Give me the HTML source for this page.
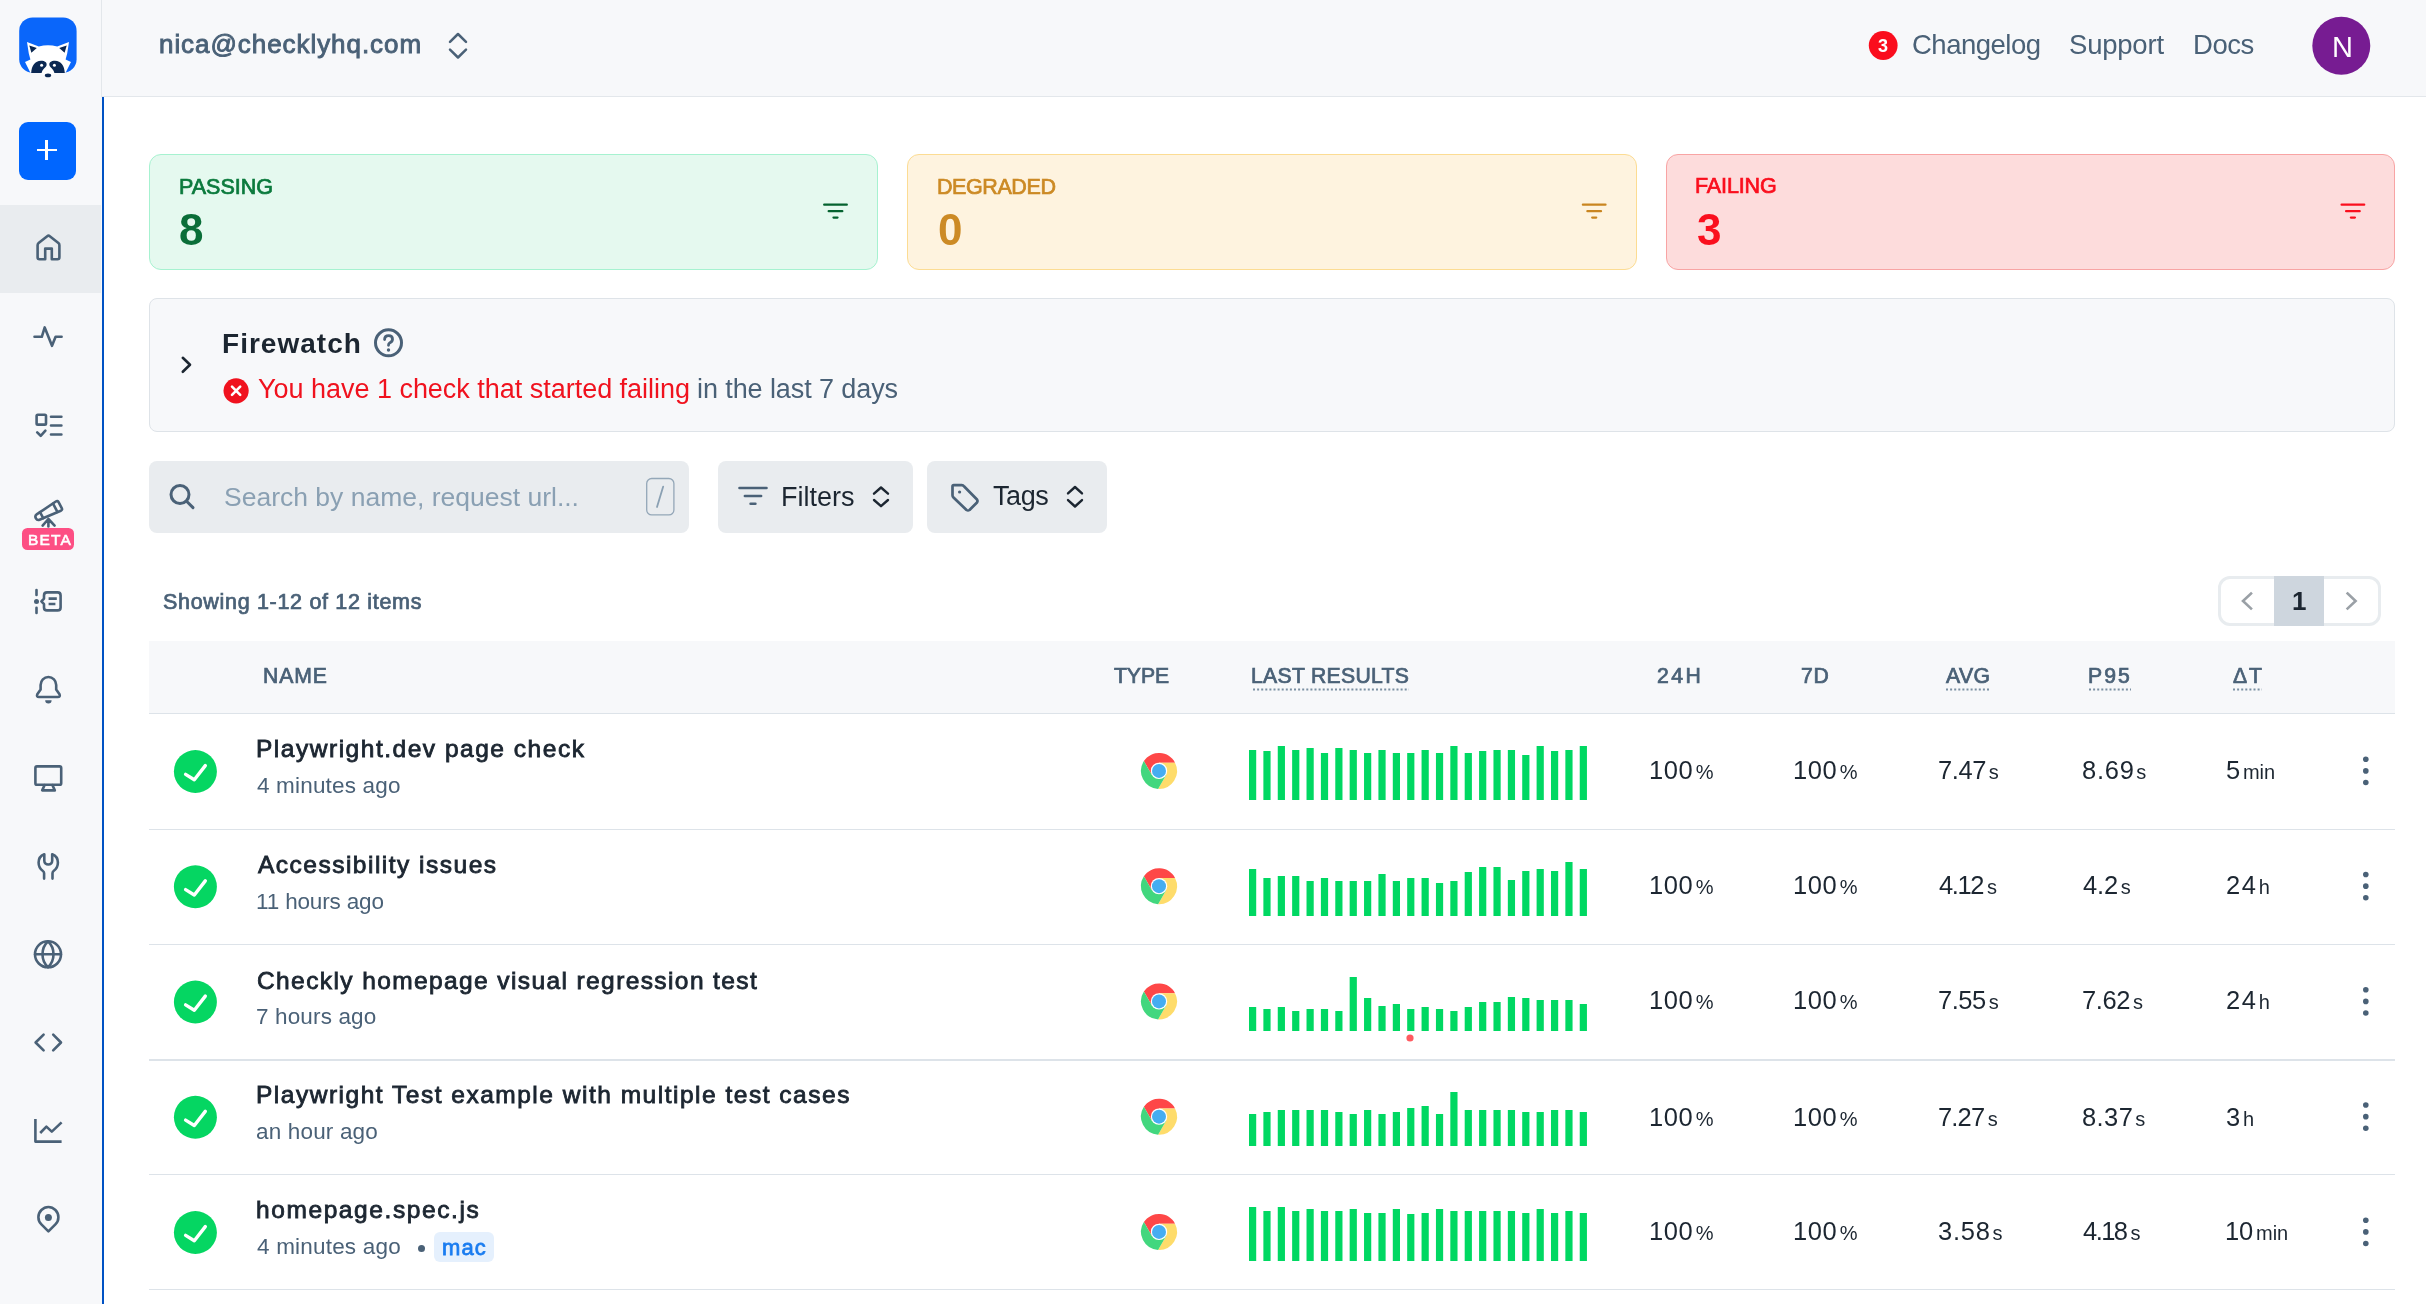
<!DOCTYPE html>
<html><head><meta charset="utf-8">
<style>
html,body{margin:0;padding:0;width:2426px;height:1304px;overflow:hidden;background:#fff;font-family:"Liberation Sans", sans-serif;}
.abs{position:absolute;}
.t{position:absolute;white-space:nowrap;line-height:1.117;will-change:transform;}
.box{position:absolute;box-sizing:border-box;}
</style></head><body>
<div class="box" style="left:0;top:0;width:102px;height:1304px;background:#f7f8fa"></div>
<div class="box" style="left:0;top:205px;width:101px;height:88px;background:#e9ecef"></div>
<div class="box" style="left:101px;top:0;width:2325px;height:97px;background:#f7f8fa;border-left:1px solid #e3e7eb;border-bottom:1px solid #e3e7eb"></div>
<div class="box" style="left:102px;top:97px;width:1.6px;height:1207px;background:#0052c4"></div>
<div class="box" style="left:19px;top:122px;width:57px;height:58px;background:#0066ff;border-radius:9px"></div>
<div class="box" style="left:36.5px;top:148.5px;width:20.7px;height:2.8px;background:#fff"></div>
<div class="box" style="left:45.4px;top:139.9px;width:2.8px;height:20px;background:#fff"></div>
<div class="box" style="left:22px;top:528px;width:51.8px;height:22px;background:#fd4f84;border-radius:5.5px"></div>
<div class="t" style="left:27.6px;top:531.47px;font-size:15.5px;font-weight:400;color:#fff;-webkit-text-stroke:0.6px #fff;letter-spacing:1.2px">BETA</div>
<!-- cards -->
<div class="box" style="left:149px;top:154px;width:729px;height:116px;background:#e5f9ef;border:1px solid #a6f2d0;border-radius:12px"></div>
<div class="box" style="left:907px;top:154px;width:729.5px;height:116px;background:#fef3df;border:1px solid #fcdc93;border-radius:12px"></div>
<div class="box" style="left:1666px;top:154px;width:729px;height:116px;background:#fddcdc;border:1px solid #f8a4a4;border-radius:12px"></div>
<!-- firewatch -->
<div class="box" style="left:149px;top:298px;width:2246px;height:134px;background:#f7f8fa;border:1px solid #dee3e8;border-radius:8px"></div>
<!-- toolbar -->
<div class="box" style="left:149px;top:461px;width:540px;height:72px;background:#e9ecef;border-radius:8px"></div>
<div class="box" style="left:718px;top:461px;width:195px;height:72px;background:#e9ecef;border-radius:8px"></div>
<div class="box" style="left:927px;top:461px;width:180px;height:72px;background:#e9ecef;border-radius:8px"></div>
<!-- pagination -->
<div class="box" style="left:2218px;top:576px;width:163px;height:50px;border:3px solid #e8ecef;border-radius:12px;background:#fff"></div>
<div class="box" style="left:2274px;top:576px;width:50px;height:50px;background:#ced6de"></div>
<!-- table -->
<div class="box" style="left:149px;top:641px;width:2246px;height:73px;background:#f7f8fa;border-bottom:1.5px solid #dde3e9"></div>
<div class="box" style="left:149px;top:828.5px;width:2246px;height:1.5px;background:#dde3e9"></div>
<div class="box" style="left:149px;top:943.75px;width:2246px;height:1.5px;background:#dde3e9"></div>
<div class="box" style="left:149px;top:1059px;width:2246px;height:1.5px;background:#dde3e9"></div>
<div class="box" style="left:149px;top:1173.75px;width:2246px;height:1.5px;background:#dde3e9"></div>
<div class="box" style="left:149px;top:1288.5px;width:2246px;height:1.5px;background:#dde3e9"></div>
<div class="box" style="left:434px;top:1232px;width:60px;height:29.5px;background:#e5f0fd;border-radius:6px"></div>
<div class="box" style="left:417.5px;top:1245.1px;width:7px;height:7px;background:#4a6177;border-radius:50%"></div>

<svg class="abs" style="left:0;top:0" width="100" height="96">
 <rect x="19.2" y="17.4" width="57.4" height="55.4" rx="13.5" fill="#0a66fa"/>
 <path d="M27 42 L38.8 46.6 Q48 43.8 57.2 46.6 L69 42 L67.2 53.5 L65.6 59.6 L71 62 L65.6 72.8 L56 72.8 L49 77.6 L47 77.6 L40 72.8 L30.4 72.8 L25 62 L30.4 59.6 L28.8 53.5 Z" fill="#fff"/>
 <path d="M29.3 45.5 L36.8 48 L31.4 52.8 Z M66.7 45.5 L59.2 48 L64.6 52.8 Z" fill="#0b2852"/>
 <path d="M31.2 73 C31.5 66 35 61 41 60.8 C45 60.8 47 62.6 46.6 65 C46.2 67.5 42.5 68.5 41.6 73 Z M64.8 73 C64.5 66 61 61 55 60.8 C51 60.8 49 62.6 49.4 65 C49.8 67.5 53.5 68.5 54.4 73 Z" fill="#0b2852"/>
 <circle cx="41.6" cy="65.3" r="1.5" fill="#fff"/><circle cx="54.4" cy="65.3" r="1.5" fill="#fff"/>
 <ellipse cx="48" cy="75.4" rx="3.2" ry="1.8" fill="#0b2852"/>
</svg>


<svg class="abs" style="left:0;top:0" width="102" height="1304" fill="none" stroke="#4a6177" stroke-width="2.6" stroke-linecap="round" stroke-linejoin="round">
 <!-- home -->
 <path d="M37.6 257.3 V245.2 Q37.6 243.9 38.6 243.1 L47.2 236.2 Q48.5 235.2 49.8 236.2 L58.4 243.1 Q59.4 243.9 59.4 245.2 V257.3 Q59.4 259.2 57.5 259.2 H51.8 V248.6 H45.2 V259.2 H39.5 Q37.6 259.2 37.6 257.3 Z"/>
 <!-- pulse -->
 <path d="M34.5 336.8 H41.8 L44.7 327.4 L52 345.8 L55.6 336.8 H61.6"/>
 <!-- checklist -->
 <rect x="36.6" y="414.8" width="9.4" height="9.8" rx="1.2"/>
 <path d="M51 416.7 H61.4 M51 425.5 H61.4 M51 434.5 H61.4 M37.2 432.4 L40.7 435.8 L45.4 430.6"/>
 <!-- telescope -->
 <g transform="translate(48.2 511.6) rotate(-28.5)">
   <path d="M-11.5 -3 L11.5 -5.2 Q13.6 -5.4 13.6 -3.3 V3.3 Q13.6 5.4 11.5 5.2 L-11.5 3 Q-14 2.8 -14 0 Q-14 -2.8 -11.5 -3 Z"/>
   <path d="M8 -4.6 V4.6 M-7.5 -3.4 V3.4"/>
 </g>
 <path d="M48.4 519 L42.6 525.6 M48.4 519 L54.6 525.6 M48.4 519 V526.5"/>
 <!-- timeline -->
 <path d="M36.5 590 V595 M36.5 607.8 V613"/>
 <circle cx="36.5" cy="601.4" r="2.5" fill="#4a6177" stroke="none"/>
 <path d="M47 592.4 H57.6 Q60.6 592.4 60.6 595.4 V607.4 Q60.6 610.4 57.6 610.4 H47 Q44 610.4 44 607.4 V604.2 L41.4 601.4 L44 598.6 V595.4 Q44 592.4 47 592.4 Z"/>
 <path d="M48.6 598.6 H56.8 M48.6 604 H55.4" stroke-linecap="butt"/>
 <!-- bell -->
 <path d="M48.4 677 C44 677 40.6 680.5 40.6 685 V689.5 L37.3 694.3 Q36.2 697 39 697 H57.8 Q60.6 697 59.5 694.3 L56.2 689.5 V685 C56.2 680.5 52.8 677 48.4 677 Z"/>
 <path d="M45.2 700.2 H51.6 A3.2 3.2 0 0 1 45.2 700.2 Z" fill="#4a6177" stroke="none"/>
 <!-- monitor -->
 <rect x="35.4" y="766.4" width="25.8" height="18.4" rx="1.6"/>
 <path d="M44.5 785.2 L42.2 790.4 H54.8 L52.5 785.2"/>
 <!-- wrench -->
 <path d="M44.1 878.6 V873.2 Q44.1 871.8 42.9 871 C40.2 869.2 38.6 866.2 38.6 862.6 C38.6 858.9 40.8 855.6 44.3 854.3 V860.8 C44.3 863 46.1 864.5 48.3 864.5 C50.5 864.5 52.2 863 52.2 860.8 V854.3 C55.7 855.6 57.9 858.9 57.9 862.6 C57.9 866.2 56.3 869.2 53.6 871 Q52.5 871.8 52.5 873.2 V878.6"/>
 <!-- globe -->
 <circle cx="48" cy="954.3" r="13"/>
 <path d="M48 941.3 A18.1 18.1 0 0 0 48 967.3 A18.1 18.1 0 0 0 48 941.3 Z"/>
 <path d="M35.2 954.3 H60.8"/>
 <!-- code -->
 <path d="M43.6 1034.6 L35.6 1042.5 L43.6 1050.4 M53.2 1034.6 L61 1042.5 L53.2 1050.4"/>
 <!-- chart -->
 <path d="M35.4 1119 V1141.6 H61.6" stroke-linecap="butt"/>
 <path d="M40.2 1133 L46.4 1126.6 L51.8 1131.6 L61.6 1122.4" stroke-linecap="butt"/>
 <!-- pin -->
 <path d="M48.4 1231.4 L41.4 1224.4 C37.4 1220.4 37.4 1214 41.4 1210 C45.4 1206 51.4 1206 55.4 1210 C59.4 1214 59.4 1220.4 55.4 1224.4 Z"/>
 <circle cx="48.4" cy="1217.4" r="3.5" fill="#4a6177" stroke="none"/>
</svg>


<svg class="abs" style="left:0;top:0" width="2426" height="1304">
 <path d="M450.0 41.8 L458.0 34.0 L466.0 41.8 M450.0 49.7 L458.0 57.5 L466.0 49.7" fill="none" stroke="#4a6177" stroke-width="2.5" stroke-linecap="round" stroke-linejoin="round"/>
 <circle cx="1883.2" cy="45.5" r="14.4" fill="#fa0d1d"/>
 <circle cx="2341.3" cy="45.8" r="29" fill="#771c92"/>
 <path d="M824.2 204.7 H846.8 M828.7 211.2 H842.3 M833.5 217.6 H837.5" fill="none" stroke="#04622f" stroke-width="2.3" stroke-linecap="round"/>
 <path d="M1582.9 204.7 H1605.5 M1587.4 211.2 H1601.0 M1592.2 217.6 H1596.2" fill="none" stroke="#c98520" stroke-width="2.3" stroke-linecap="round"/>
 <path d="M2341.6 204.7 H2364.2 M2346.1 211.2 H2359.7 M2350.9 217.6 H2354.9" fill="none" stroke="#fa0f1e" stroke-width="2.3" stroke-linecap="round"/>
 <path d="M182.8 357.8 L190 364.8 L182.8 371.8" fill="none" stroke="#1c2631" stroke-width="2.6" stroke-linecap="round" stroke-linejoin="round"/>
 <circle cx="388.5" cy="342.8" r="13" fill="none" stroke="#4a6177" stroke-width="3"/>
 <path d="M384.6 339.6 Q384.6 335.6 388.6 335.6 Q392.5 335.6 392.5 339.3 Q392.5 341.7 389.6 343 Q388.5 343.6 388.5 345.3" fill="none" stroke="#4a6177" stroke-width="2.8" stroke-linecap="round"/>
 <circle cx="388.5" cy="350" r="1.7" fill="#4a6177"/>
 <circle cx="236.1" cy="390.8" r="12.6" fill="#f0121e"/>
 <path d="M232 386.7 L240.2 394.9 M240.2 386.7 L232 394.9" stroke="#fff" stroke-width="2.6" stroke-linecap="round"/>
 <circle cx="180" cy="494.5" r="9" fill="none" stroke="#4a6177" stroke-width="3"/>
 <path d="M186.6 501.2 L193 507.6" stroke="#4a6177" stroke-width="3" stroke-linecap="round"/>
 <rect x="646.7" y="478.5" width="27.2" height="36.4" rx="5" fill="none" stroke="#94a7b8" stroke-width="1.3"/>
 <path d="M663.2 486.6 L657 507" stroke="#8aa0b3" stroke-width="1.8" stroke-linecap="round"/>
 <path d="M739.5 488.0 H766.5 M744.9 496.0 H761.1 M750.6 503.7 H755.4" fill="none" stroke="#4a6177" stroke-width="2.6" stroke-linecap="round"/>
 <path d="M874.0 493.7 L881.0 487.5 L888.0 493.7 M874.0 500.0 L881.0 506.2 L888.0 500.0" fill="none" stroke="#1c2631" stroke-width="2.4" stroke-linecap="round" stroke-linejoin="round"/>
 <path d="M952.5 486.5 V495.2 Q952.5 496.5 953.5 497.5 L966.5 510 Q968 511 969.5 510 L977 502.5 Q978 501 977 499.5 L964.2 486.5 Q963.2 485.2 961.8 485.2 H953.8 Q952.5 485.2 952.5 486.5 Z" fill="none" stroke="#4a6177" stroke-width="2.7" stroke-linejoin="round"/>
 <circle cx="959.6" cy="492" r="1.6" fill="#4a6177"/>
 <path d="M1068.0 493.4 L1075.0 487.0 L1082.0 493.4 M1068.0 500.1 L1075.0 506.5 L1082.0 500.1" fill="none" stroke="#1c2631" stroke-width="2.4" stroke-linecap="round" stroke-linejoin="round"/>
 <path d="M2251 593.5 L2243 601 L2251 608.5" fill="none" stroke="#9aa0a6" stroke-width="2.6" stroke-linecap="square"/>
 <path d="M2347.6 593.5 L2355.6 601 L2347.6 608.5" fill="none" stroke="#9aa0a6" stroke-width="2.6" stroke-linecap="square"/>
 <g stroke="#7b8fa2" stroke-width="2" stroke-dasharray="2 2.1">
  <path d="M1253 689.6 H1409"/><path d="M1946 689.6 H1990"/><path d="M2089 689.6 H2131"/><path d="M2233 689.6 H2262"/>
 </g>
</svg>

<svg class="abs" style="left:0;top:0" width="2426" height="1304"><circle cx="195.4" cy="771.50" r="21.5" fill="#05d662"/><path d="M185.6 774.40 L194.3 779.80 L205.3 765.60" fill="none" stroke="#fff" stroke-width="3.4" stroke-linecap="round" stroke-linejoin="round"/><path d="M1175.02 762.70 A18 18 0 0 0 1143.89 761.12 L1151.90 775.00 L1159.00 770.90 L1159.00 762.70 Z" fill="#fe4747"/><path d="M1158.09 788.88 A18 18 0 0 0 1175.02 762.70 L1159.00 762.70 L1159.00 770.90 L1166.10 775.00 Z" fill="#fedc6b"/><path d="M1143.89 761.12 A18 18 0 0 0 1158.09 788.88 L1166.10 775.00 L1159.00 770.90 L1151.90 775.00 Z" fill="#42d77e"/><circle cx="1159" cy="770.9" r="8.2" fill="#fff"/><circle cx="1159" cy="770.9" r="7.0" fill="#45adf1"/><circle cx="2365.8" cy="759.30" r="2.8" fill="#4a6177"/><circle cx="2365.8" cy="770.90" r="2.8" fill="#4a6177"/><circle cx="2365.8" cy="782.50" r="2.8" fill="#4a6177"/><circle cx="195.4" cy="886.75" r="21.5" fill="#05d662"/><path d="M185.6 889.65 L194.3 895.05 L205.3 880.85" fill="none" stroke="#fff" stroke-width="3.4" stroke-linecap="round" stroke-linejoin="round"/><path d="M1175.02 877.95 A18 18 0 0 0 1143.89 876.37 L1151.90 890.25 L1159.00 886.15 L1159.00 877.95 Z" fill="#fe4747"/><path d="M1158.09 904.13 A18 18 0 0 0 1175.02 877.95 L1159.00 877.95 L1159.00 886.15 L1166.10 890.25 Z" fill="#fedc6b"/><path d="M1143.89 876.37 A18 18 0 0 0 1158.09 904.13 L1166.10 890.25 L1159.00 886.15 L1151.90 890.25 Z" fill="#42d77e"/><circle cx="1159" cy="886.15" r="8.2" fill="#fff"/><circle cx="1159" cy="886.15" r="7.0" fill="#45adf1"/><circle cx="2365.8" cy="874.55" r="2.8" fill="#4a6177"/><circle cx="2365.8" cy="886.15" r="2.8" fill="#4a6177"/><circle cx="2365.8" cy="897.75" r="2.8" fill="#4a6177"/><circle cx="195.4" cy="1002.00" r="21.5" fill="#05d662"/><path d="M185.6 1004.90 L194.3 1010.30 L205.3 996.10" fill="none" stroke="#fff" stroke-width="3.4" stroke-linecap="round" stroke-linejoin="round"/><path d="M1175.02 993.20 A18 18 0 0 0 1143.89 991.62 L1151.90 1005.50 L1159.00 1001.40 L1159.00 993.20 Z" fill="#fe4747"/><path d="M1158.09 1019.38 A18 18 0 0 0 1175.02 993.20 L1159.00 993.20 L1159.00 1001.40 L1166.10 1005.50 Z" fill="#fedc6b"/><path d="M1143.89 991.62 A18 18 0 0 0 1158.09 1019.38 L1166.10 1005.50 L1159.00 1001.40 L1151.90 1005.50 Z" fill="#42d77e"/><circle cx="1159" cy="1001.4" r="8.2" fill="#fff"/><circle cx="1159" cy="1001.4" r="7.0" fill="#45adf1"/><circle cx="2365.8" cy="989.80" r="2.8" fill="#4a6177"/><circle cx="2365.8" cy="1001.40" r="2.8" fill="#4a6177"/><circle cx="2365.8" cy="1013.00" r="2.8" fill="#4a6177"/><circle cx="195.4" cy="1117.25" r="21.5" fill="#05d662"/><path d="M185.6 1120.15 L194.3 1125.55 L205.3 1111.35" fill="none" stroke="#fff" stroke-width="3.4" stroke-linecap="round" stroke-linejoin="round"/><path d="M1175.02 1108.45 A18 18 0 0 0 1143.89 1106.87 L1151.90 1120.75 L1159.00 1116.65 L1159.00 1108.45 Z" fill="#fe4747"/><path d="M1158.09 1134.63 A18 18 0 0 0 1175.02 1108.45 L1159.00 1108.45 L1159.00 1116.65 L1166.10 1120.75 Z" fill="#fedc6b"/><path d="M1143.89 1106.87 A18 18 0 0 0 1158.09 1134.63 L1166.10 1120.75 L1159.00 1116.65 L1151.90 1120.75 Z" fill="#42d77e"/><circle cx="1159" cy="1116.65" r="8.2" fill="#fff"/><circle cx="1159" cy="1116.65" r="7.0" fill="#45adf1"/><circle cx="2365.8" cy="1105.05" r="2.8" fill="#4a6177"/><circle cx="2365.8" cy="1116.65" r="2.8" fill="#4a6177"/><circle cx="2365.8" cy="1128.25" r="2.8" fill="#4a6177"/><circle cx="195.4" cy="1232.50" r="21.5" fill="#05d662"/><path d="M185.6 1235.40 L194.3 1240.80 L205.3 1226.60" fill="none" stroke="#fff" stroke-width="3.4" stroke-linecap="round" stroke-linejoin="round"/><path d="M1175.02 1223.70 A18 18 0 0 0 1143.89 1222.12 L1151.90 1236.00 L1159.00 1231.90 L1159.00 1223.70 Z" fill="#fe4747"/><path d="M1158.09 1249.88 A18 18 0 0 0 1175.02 1223.70 L1159.00 1223.70 L1159.00 1231.90 L1166.10 1236.00 Z" fill="#fedc6b"/><path d="M1143.89 1222.12 A18 18 0 0 0 1158.09 1249.88 L1166.10 1236.00 L1159.00 1231.90 L1151.90 1236.00 Z" fill="#42d77e"/><circle cx="1159" cy="1231.9" r="8.2" fill="#fff"/><circle cx="1159" cy="1231.9" r="7.0" fill="#45adf1"/><circle cx="2365.8" cy="1220.30" r="2.8" fill="#4a6177"/><circle cx="2365.8" cy="1231.90" r="2.8" fill="#4a6177"/><circle cx="2365.8" cy="1243.50" r="2.8" fill="#4a6177"/></svg>
<svg class="abs" style="left:0;top:0" width="2426" height="1304"><g fill="#00d862"><rect x="1249.00" y="750" width="7.2" height="50"/><rect x="1263.38" y="751" width="7.2" height="49"/><rect x="1277.76" y="746" width="7.2" height="54"/><rect x="1292.14" y="750" width="7.2" height="50"/><rect x="1306.52" y="748" width="7.2" height="52"/><rect x="1320.90" y="753" width="7.2" height="47"/><rect x="1335.28" y="748" width="7.2" height="52"/><rect x="1349.66" y="750" width="7.2" height="50"/><rect x="1364.04" y="753" width="7.2" height="47"/><rect x="1378.42" y="750" width="7.2" height="50"/><rect x="1392.80" y="753" width="7.2" height="47"/><rect x="1407.18" y="753" width="7.2" height="47"/><rect x="1421.56" y="750" width="7.2" height="50"/><rect x="1435.94" y="753" width="7.2" height="47"/><rect x="1450.32" y="746" width="7.2" height="54"/><rect x="1464.70" y="753" width="7.2" height="47"/><rect x="1479.08" y="751" width="7.2" height="49"/><rect x="1493.46" y="750" width="7.2" height="50"/><rect x="1507.84" y="750" width="7.2" height="50"/><rect x="1522.22" y="755" width="7.2" height="45"/><rect x="1536.60" y="746" width="7.2" height="54"/><rect x="1550.98" y="751" width="7.2" height="49"/><rect x="1565.36" y="750" width="7.2" height="50"/><rect x="1579.74" y="746" width="7.2" height="54"/><rect x="1249.00" y="869" width="7.2" height="47"/><rect x="1263.38" y="878" width="7.2" height="38"/><rect x="1277.76" y="876" width="7.2" height="40"/><rect x="1292.14" y="876" width="7.2" height="40"/><rect x="1306.52" y="881" width="7.2" height="35"/><rect x="1320.90" y="878" width="7.2" height="38"/><rect x="1335.28" y="881" width="7.2" height="35"/><rect x="1349.66" y="881" width="7.2" height="35"/><rect x="1364.04" y="881" width="7.2" height="35"/><rect x="1378.42" y="874" width="7.2" height="42"/><rect x="1392.80" y="881" width="7.2" height="35"/><rect x="1407.18" y="878" width="7.2" height="38"/><rect x="1421.56" y="878" width="7.2" height="38"/><rect x="1435.94" y="883" width="7.2" height="33"/><rect x="1450.32" y="881" width="7.2" height="35"/><rect x="1464.70" y="872" width="7.2" height="44"/><rect x="1479.08" y="867" width="7.2" height="49"/><rect x="1493.46" y="867" width="7.2" height="49"/><rect x="1507.84" y="880" width="7.2" height="36"/><rect x="1522.22" y="871" width="7.2" height="45"/><rect x="1536.60" y="869" width="7.2" height="47"/><rect x="1550.98" y="871" width="7.2" height="45"/><rect x="1565.36" y="862" width="7.2" height="54"/><rect x="1579.74" y="869" width="7.2" height="47"/><rect x="1249.00" y="1007" width="7.2" height="24"/><rect x="1263.38" y="1009" width="7.2" height="22"/><rect x="1277.76" y="1007" width="7.2" height="24"/><rect x="1292.14" y="1011" width="7.2" height="20"/><rect x="1306.52" y="1009" width="7.2" height="22"/><rect x="1320.90" y="1009" width="7.2" height="22"/><rect x="1335.28" y="1011" width="7.2" height="20"/><rect x="1349.66" y="977" width="7.2" height="54"/><rect x="1364.04" y="998" width="7.2" height="33"/><rect x="1378.42" y="1006" width="7.2" height="25"/><rect x="1392.80" y="1004" width="7.2" height="27"/><rect x="1407.18" y="1009" width="7.2" height="22"/><rect x="1421.56" y="1007" width="7.2" height="24"/><rect x="1435.94" y="1009" width="7.2" height="22"/><rect x="1450.32" y="1011" width="7.2" height="20"/><rect x="1464.70" y="1007" width="7.2" height="24"/><rect x="1479.08" y="1002" width="7.2" height="29"/><rect x="1493.46" y="1002" width="7.2" height="29"/><rect x="1507.84" y="997" width="7.2" height="34"/><rect x="1522.22" y="998" width="7.2" height="33"/><rect x="1536.60" y="1000" width="7.2" height="31"/><rect x="1550.98" y="1000" width="7.2" height="31"/><rect x="1565.36" y="1000" width="7.2" height="31"/><rect x="1579.74" y="1004" width="7.2" height="27"/><rect x="1249.00" y="1114" width="7.2" height="32"/><rect x="1263.38" y="1112" width="7.2" height="34"/><rect x="1277.76" y="1110" width="7.2" height="36"/><rect x="1292.14" y="1110" width="7.2" height="36"/><rect x="1306.52" y="1110" width="7.2" height="36"/><rect x="1320.90" y="1110" width="7.2" height="36"/><rect x="1335.28" y="1112" width="7.2" height="34"/><rect x="1349.66" y="1114" width="7.2" height="32"/><rect x="1364.04" y="1110" width="7.2" height="36"/><rect x="1378.42" y="1114" width="7.2" height="32"/><rect x="1392.80" y="1112" width="7.2" height="34"/><rect x="1407.18" y="1108" width="7.2" height="38"/><rect x="1421.56" y="1106" width="7.2" height="40"/><rect x="1435.94" y="1114" width="7.2" height="32"/><rect x="1450.32" y="1092" width="7.2" height="54"/><rect x="1464.70" y="1110" width="7.2" height="36"/><rect x="1479.08" y="1110" width="7.2" height="36"/><rect x="1493.46" y="1110" width="7.2" height="36"/><rect x="1507.84" y="1110" width="7.2" height="36"/><rect x="1522.22" y="1112" width="7.2" height="34"/><rect x="1536.60" y="1112" width="7.2" height="34"/><rect x="1550.98" y="1110" width="7.2" height="36"/><rect x="1565.36" y="1110" width="7.2" height="36"/><rect x="1579.74" y="1112" width="7.2" height="34"/><rect x="1249.00" y="1207" width="7.2" height="54"/><rect x="1263.38" y="1211" width="7.2" height="50"/><rect x="1277.76" y="1207" width="7.2" height="54"/><rect x="1292.14" y="1211" width="7.2" height="50"/><rect x="1306.52" y="1209" width="7.2" height="52"/><rect x="1320.90" y="1211" width="7.2" height="50"/><rect x="1335.28" y="1211" width="7.2" height="50"/><rect x="1349.66" y="1209" width="7.2" height="52"/><rect x="1364.04" y="1213" width="7.2" height="48"/><rect x="1378.42" y="1213" width="7.2" height="48"/><rect x="1392.80" y="1209" width="7.2" height="52"/><rect x="1407.18" y="1214" width="7.2" height="47"/><rect x="1421.56" y="1213" width="7.2" height="48"/><rect x="1435.94" y="1209" width="7.2" height="52"/><rect x="1450.32" y="1211" width="7.2" height="50"/><rect x="1464.70" y="1211" width="7.2" height="50"/><rect x="1479.08" y="1211" width="7.2" height="50"/><rect x="1493.46" y="1211" width="7.2" height="50"/><rect x="1507.84" y="1211" width="7.2" height="50"/><rect x="1522.22" y="1213" width="7.2" height="48"/><rect x="1536.60" y="1209" width="7.2" height="52"/><rect x="1550.98" y="1213" width="7.2" height="48"/><rect x="1565.36" y="1211" width="7.2" height="50"/><rect x="1579.74" y="1213" width="7.2" height="48"/></g><circle cx="1410" cy="1038" r="3.6" fill="#ff5a60"/></svg>
<div class="t" style="left:1877.70px;top:35.71px;font-size:18px;font-weight:700;color:#fff">3</div>
<div class="t" style="left:2331.5px;top:31.05px;font-size:29px;font-weight:400;color:#fff">N</div>
<div class="t" style="left:159.00px;top:30.00px;font-size:26px;font-weight:400;color:#4a6177;-webkit-text-stroke:0.90px #4a6177;"><span id="email" style="letter-spacing:0.941px">nica@checklyhq.com</span></div>
<div class="t" style="left:1912.00px;top:30.00px;font-size:27.5px;font-weight:400;color:#4a6177;"><span id="chg" style="letter-spacing:-0.500px">Changelog</span></div>
<div class="t" style="left:2069.00px;top:30.00px;font-size:27.5px;font-weight:400;color:#4a6177;"><span id="sup" style="letter-spacing:-0.215px">Support</span></div>
<div class="t" style="left:2193.20px;top:30.00px;font-size:27.5px;font-weight:400;color:#4a6177;"><span id="docs" style="letter-spacing:-0.463px">Docs</span></div>
<div class="t" style="left:178.60px;top:175.00px;font-size:21.5px;font-weight:400;color:#0b7a3d;-webkit-text-stroke:0.74px #0b7a3d;"><span id="pass" style="letter-spacing:0.000px">PASSING</span></div>
<div class="t" style="left:179.00px;top:205.00px;font-size:44px;font-weight:700;color:#0a6e38;"><span id="pass_n" style="letter-spacing:0.000px">8</span></div>
<div class="t" style="left:936.80px;top:175.00px;font-size:21.5px;font-weight:400;color:#cc8a25;-webkit-text-stroke:0.74px #cc8a25;"><span id="deg" style="letter-spacing:-0.420px">DEGRADED</span></div>
<div class="t" style="left:938.40px;top:205.00px;font-size:44px;font-weight:700;color:#cc8a25;"><span id="deg_n" style="letter-spacing:0.000px">0</span></div>
<div class="t" style="left:1695.40px;top:174.00px;font-size:21.5px;font-weight:400;color:#fa0f1e;-webkit-text-stroke:0.74px #fa0f1e;"><span id="fail" style="letter-spacing:-0.119px">FAILING</span></div>
<div class="t" style="left:1696.80px;top:205.00px;font-size:44px;font-weight:700;color:#fa0f1e;"><span id="fail_n" style="letter-spacing:0.000px">3</span></div>
<div class="t" style="left:221.80px;top:328.00px;font-size:28px;font-weight:700;color:#1c2631;"><span id="fw" style="letter-spacing:1.025px">Firewatch</span></div>
<div class="t" style="left:258.40px;top:374.00px;font-size:27px;font-weight:400;color:#f0121e;"><span id="fw_red" style="letter-spacing:-0.021px">You have 1 check that started failing</span></div>
<div class="t" style="left:696.60px;top:374.00px;font-size:27px;font-weight:400;color:#4a6177;"><span id="fw_gray" style="letter-spacing:-0.088px">in the last 7 days</span></div>
<div class="t" style="left:224.00px;top:483.00px;font-size:26.5px;font-weight:400;color:#8aa0b3;"><span id="search" style="letter-spacing:0.000px">Search by name, request url...</span></div>
<div class="t" style="left:781.00px;top:482.00px;font-size:27px;font-weight:400;color:#1c2631;"><span id="filters" style="letter-spacing:0.000px">Filters</span></div>
<div class="t" style="left:993.40px;top:481.00px;font-size:27px;font-weight:400;color:#1c2631;"><span id="tags" style="letter-spacing:-0.403px">Tags</span></div>
<div class="t" style="left:163.00px;top:590.00px;font-size:21.5px;font-weight:400;color:#4a6177;-webkit-text-stroke:0.74px #4a6177;"><span id="showing" style="letter-spacing:0.687px">Showing 1-12 of 12 items</span></div>
<div class="t" style="left:2292.00px;top:587.00px;font-size:26px;font-weight:700;color:#1c2631;"><span id="page1" style="letter-spacing:0.000px">1</span></div>
<div class="t" style="left:263.40px;top:664.00px;font-size:21.2px;font-weight:400;color:#4a6177;-webkit-text-stroke:0.73px #4a6177;"><span id="h_name" style="letter-spacing:0.871px">NAME</span></div>
<div class="t" style="left:1113.60px;top:664.00px;font-size:21.2px;font-weight:400;color:#4a6177;-webkit-text-stroke:0.73px #4a6177;"><span id="h_type" style="letter-spacing:-0.070px">TYPE</span></div>
<div class="t" style="left:1251.40px;top:664.00px;font-size:21.2px;font-weight:400;color:#4a6177;-webkit-text-stroke:0.73px #4a6177;"><span id="h_last" style="letter-spacing:0.294px">LAST RESULTS</span></div>
<div class="t" style="left:1657.00px;top:664.00px;font-size:21.2px;font-weight:400;color:#4a6177;-webkit-text-stroke:0.73px #4a6177;"><span id="h_24" style="letter-spacing:2.450px">24H</span></div>
<div class="t" style="left:1801.00px;top:664.00px;font-size:21.2px;font-weight:400;color:#4a6177;-webkit-text-stroke:0.73px #4a6177;"><span id="h_7d" style="letter-spacing:0.600px">7D</span></div>
<div class="t" style="left:1946.20px;top:664.00px;font-size:21.2px;font-weight:400;color:#4a6177;-webkit-text-stroke:0.73px #4a6177;"><span id="h_avg" style="letter-spacing:0.400px">AVG</span></div>
<div class="t" style="left:2088.00px;top:664.00px;font-size:21.2px;font-weight:400;color:#4a6177;-webkit-text-stroke:0.73px #4a6177;"><span id="h_p95" style="letter-spacing:2.000px">P95</span></div>
<div class="t" style="left:2233.00px;top:664.00px;font-size:21.2px;font-weight:400;color:#4a6177;-webkit-text-stroke:0.73px #4a6177;"><span id="h_dt" style="letter-spacing:1.900px">ΔT</span></div>
<div class="t" style="left:256.00px;top:735.00px;font-size:24.5px;font-weight:400;color:#1c2631;-webkit-text-stroke:0.85px #1c2631;"><span id="r0_title" style="letter-spacing:1.520px">Playwright.dev page check</span></div>
<div class="t" style="left:257.00px;top:773.00px;font-size:22.5px;font-weight:400;color:#4a6177;"><span id="r0_sub" style="letter-spacing:0.173px">4 minutes ago</span></div>
<div class="t" style="left:1648.80px;top:756.00px;font-size:25.5px;font-weight:400;color:#1c2631;"><span id="r0_24" style="letter-spacing:0.600px">100</span><span style="font-size:20px;margin-left:2.50px">%</span></div>
<div class="t" style="left:1793.00px;top:756.00px;font-size:25.5px;font-weight:400;color:#1c2631;"><span id="r0_7d" style="letter-spacing:0.600px">100</span><span style="font-size:20px;margin-left:2.50px">%</span></div>
<div class="t" style="left:1937.80px;top:756.00px;font-size:25.5px;font-weight:400;color:#1c2631;"><span id="r0_avg" style="letter-spacing:-0.435px">7.47</span><span style="font-size:20px;margin-left:2.94px">s</span></div>
<div class="t" style="left:2082.20px;top:756.00px;font-size:25.5px;font-weight:400;color:#1c2631;"><span id="r0_p95" style="letter-spacing:0.735px">8.69</span><span style="font-size:20px;margin-left:1.77px">s</span></div>
<div class="t" style="left:2226.00px;top:756.00px;font-size:25.5px;font-weight:400;color:#1c2631;"><span id="r0_dt" style="letter-spacing:0.000px">5</span><span style="font-size:20px;margin-left:2.70px">min</span></div>
<div class="t" style="left:258.00px;top:851.00px;font-size:24.5px;font-weight:400;color:#1c2631;-webkit-text-stroke:0.85px #1c2631;"><span id="r1_title" style="letter-spacing:1.491px">Accessibility issues</span></div>
<div class="t" style="left:256.00px;top:889.00px;font-size:22.5px;font-weight:400;color:#4a6177;"><span id="r1_sub" style="letter-spacing:-0.161px">11 hours ago</span></div>
<div class="t" style="left:1648.80px;top:871.00px;font-size:25.5px;font-weight:400;color:#1c2631;"><span id="r1_24" style="letter-spacing:0.600px">100</span><span style="font-size:20px;margin-left:2.50px">%</span></div>
<div class="t" style="left:1793.00px;top:871.00px;font-size:25.5px;font-weight:400;color:#1c2631;"><span id="r1_7d" style="letter-spacing:0.600px">100</span><span style="font-size:20px;margin-left:2.50px">%</span></div>
<div class="t" style="left:1938.80px;top:871.00px;font-size:25.5px;font-weight:400;color:#1c2631;"><span id="r1_avg" style="letter-spacing:-1.398px">4.12</span><span style="font-size:20px;margin-left:3.90px">s</span></div>
<div class="t" style="left:2083.20px;top:871.00px;font-size:25.5px;font-weight:400;color:#1c2631;"><span id="r1_p95" style="letter-spacing:-0.150px">4.2</span><span style="font-size:20px;margin-left:2.65px">s</span></div>
<div class="t" style="left:2226.00px;top:871.00px;font-size:25.5px;font-weight:400;color:#1c2631;"><span id="r1_dt" style="letter-spacing:1.600px">24</span><span style="font-size:20px;margin-left:1.10px">h</span></div>
<div class="t" style="left:257.00px;top:967.00px;font-size:24.5px;font-weight:400;color:#1c2631;-webkit-text-stroke:0.85px #1c2631;"><span id="r2_title" style="letter-spacing:1.398px">Checkly homepage visual regression test</span></div>
<div class="t" style="left:256.00px;top:1004.00px;font-size:22.5px;font-weight:400;color:#4a6177;"><span id="r2_sub" style="letter-spacing:0.140px">7 hours ago</span></div>
<div class="t" style="left:1648.80px;top:986.00px;font-size:25.5px;font-weight:400;color:#1c2631;"><span id="r2_24" style="letter-spacing:0.600px">100</span><span style="font-size:20px;margin-left:2.50px">%</span></div>
<div class="t" style="left:1793.00px;top:986.00px;font-size:25.5px;font-weight:400;color:#1c2631;"><span id="r2_7d" style="letter-spacing:0.600px">100</span><span style="font-size:20px;margin-left:2.50px">%</span></div>
<div class="t" style="left:1937.80px;top:986.00px;font-size:25.5px;font-weight:400;color:#1c2631;"><span id="r2_avg" style="letter-spacing:-0.468px">7.55</span><span style="font-size:20px;margin-left:2.97px">s</span></div>
<div class="t" style="left:2082.20px;top:986.00px;font-size:25.5px;font-weight:400;color:#1c2631;"><span id="r2_p95" style="letter-spacing:-0.398px">7.62</span><span style="font-size:20px;margin-left:2.90px">s</span></div>
<div class="t" style="left:2226.00px;top:986.00px;font-size:25.5px;font-weight:400;color:#1c2631;"><span id="r2_dt" style="letter-spacing:1.600px">24</span><span style="font-size:20px;margin-left:1.10px">h</span></div>
<div class="t" style="left:256.00px;top:1081.00px;font-size:24.5px;font-weight:400;color:#1c2631;-webkit-text-stroke:0.85px #1c2631;"><span id="r3_title" style="letter-spacing:1.510px">Playwright Test example with multiple test cases</span></div>
<div class="t" style="left:256.00px;top:1119.00px;font-size:22.5px;font-weight:400;color:#4a6177;"><span id="r3_sub" style="letter-spacing:0.170px">an hour ago</span></div>
<div class="t" style="left:1648.80px;top:1103.00px;font-size:25.5px;font-weight:400;color:#1c2631;"><span id="r3_24" style="letter-spacing:0.600px">100</span><span style="font-size:20px;margin-left:2.50px">%</span></div>
<div class="t" style="left:1793.00px;top:1103.00px;font-size:25.5px;font-weight:400;color:#1c2631;"><span id="r3_7d" style="letter-spacing:0.600px">100</span><span style="font-size:20px;margin-left:2.50px">%</span></div>
<div class="t" style="left:1937.80px;top:1103.00px;font-size:25.5px;font-weight:400;color:#1c2631;"><span id="r3_avg" style="letter-spacing:-0.834px">7.27</span><span style="font-size:20px;margin-left:3.33px">s</span></div>
<div class="t" style="left:2082.20px;top:1103.00px;font-size:25.5px;font-weight:400;color:#1c2631;"><span id="r3_p95" style="letter-spacing:0.399px">8.37</span><span style="font-size:20px;margin-left:2.10px">s</span></div>
<div class="t" style="left:2226.00px;top:1103.00px;font-size:25.5px;font-weight:400;color:#1c2631;"><span id="r3_dt" style="letter-spacing:0.000px">3</span><span style="font-size:20px;margin-left:2.70px">h</span></div>
<div class="t" style="left:256.00px;top:1196.00px;font-size:24.5px;font-weight:400;color:#1c2631;-webkit-text-stroke:0.85px #1c2631;"><span id="r4_title" style="letter-spacing:1.589px">homepage.spec.js</span></div>
<div class="t" style="left:257.00px;top:1234.00px;font-size:22.5px;font-weight:400;color:#4a6177;"><span id="r4_sub" style="letter-spacing:0.194px">4 minutes ago</span></div>
<div class="t" style="left:1648.80px;top:1217.00px;font-size:25.5px;font-weight:400;color:#1c2631;"><span id="r4_24" style="letter-spacing:0.600px">100</span><span style="font-size:20px;margin-left:2.50px">%</span></div>
<div class="t" style="left:1793.00px;top:1217.00px;font-size:25.5px;font-weight:400;color:#1c2631;"><span id="r4_7d" style="letter-spacing:0.600px">100</span><span style="font-size:20px;margin-left:2.50px">%</span></div>
<div class="t" style="left:1937.80px;top:1217.00px;font-size:25.5px;font-weight:400;color:#1c2631;"><span id="r4_avg" style="letter-spacing:0.799px">3.58</span><span style="font-size:20px;margin-left:1.70px">s</span></div>
<div class="t" style="left:2083.20px;top:1217.00px;font-size:25.5px;font-weight:400;color:#1c2631;"><span id="r4_p95" style="letter-spacing:-1.532px">4.18</span><span style="font-size:20px;margin-left:4.03px">s</span></div>
<div class="t" style="left:2225.00px;top:1217.00px;font-size:25.5px;font-weight:400;color:#1c2631;"><span id="r4_dt" style="letter-spacing:-0.100px">10</span><span style="font-size:20px;margin-left:2.80px">min</span></div>
<div class="t" style="left:441.80px;top:1236.00px;font-size:22px;font-weight:400;color:#1a7cf0;-webkit-text-stroke:0.76px #1a7cf0;"><span id="mac" style="letter-spacing:1.100px">mac</span></div>
</body></html>
